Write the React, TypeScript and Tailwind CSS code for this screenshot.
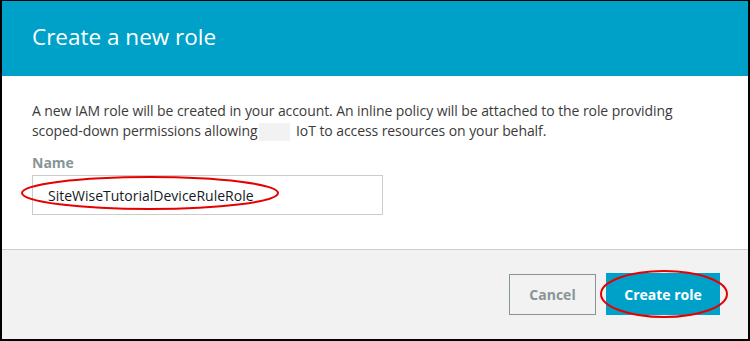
export default function App() {
  return (
    <div className="w-[750px] h-[341px] bg-white border-t border-l-2 border-r-2 border-b-2 border-black flex flex-col overflow-hidden relative font-['Open_Sans',sans-serif]">
      <div className="h-[75px] bg-[#00a1c9] flex items-center pl-[30px] shrink-0">
        <h1 className="text-white text-[22.5px] leading-none pb-[3px] font-medium">Create a new role</h1>
      </div>
      <div className="px-[30px] pt-[25px] h-[174px] shrink-0 border-b border-[#cccccc]">
        <p className="text-[#3b3b3b] text-[14px] leading-[20px] tracking-[-0.08px]">
          A new IAM role will be created in your account. An inline policy will be attached to the role providing
          <br />
          scoped-down permissions allowing
          <span className="inline-block w-[31px] h-[18px] bg-[#f2f2f2] align-middle mx-[2px]"></span> IoT to access resources on your behalf.
        </p>
        <div className="mt-[13px] text-[#879596] text-[14px] font-bold leading-[18px]">Name</div>
        <div className="relative mt-[3px] w-[351px] h-[40px] border border-[#cccccc] flex items-center pl-[15px] text-[#16191f] text-[14px]">
          SiteWiseTutorialDeviceRuleRole
          <svg className="absolute left-[-14px] top-[-1px]" width="262" height="36" viewBox="0 0 262 36">
            <ellipse cx="131" cy="18" rx="128" ry="16" fill="none" stroke="#e60000" strokeWidth="2" />
          </svg>
        </div>
      </div>
      <div className="flex-1 bg-[#f2f2f2] flex justify-end items-start pt-[24px] pr-[28px] gap-[10px]">
        <button className="w-[87px] h-[41px] border border-[#879596] text-[#879596] text-[14px] font-bold bg-[#f2f2f2]">
          Cancel
        </button>
        <div className="relative">
          <button className="w-[114px] h-[42px] bg-[#00a1c9] text-white text-[14px] font-bold -mt-[1px] block">
            Create role
          </button>
          <svg className="absolute left-[-8px] top-[-6px]" width="132" height="52" viewBox="0 0 132 52">
            <ellipse cx="66" cy="26" rx="63" ry="23" fill="none" stroke="#e60000" strokeWidth="2" />
          </svg>
        </div>
      </div>
    </div>
  );
}
